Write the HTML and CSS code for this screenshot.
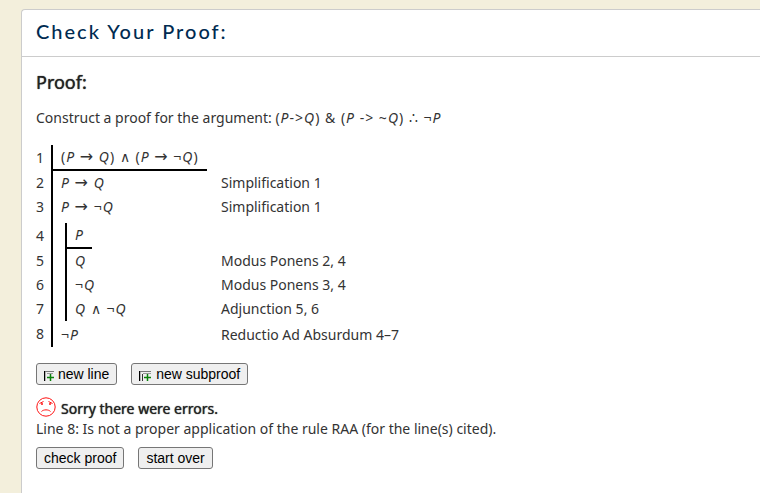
FILE: index.html
```
<!DOCTYPE html>
<html lang="en">
<head>
    <meta charset="UTF-8">
    <meta name="viewport" content="width=device-width, initial-scale=1.0">
    <title>Check Your Proof</title>
    <link rel="stylesheet" href="styles.css">
</head>
<body>
    <main class="card">
        <h1 class="card-title">Check Your Proof:</h1>
        <div class="card-body">
            <h2 class="proof-title">Proof:</h2>
            <p class="problem">Construct a proof for the argument: <span class="math">(<i>P</i>-&gt;<i>Q</i>) &amp; (<i>P</i> -&gt; ~<i>Q</i>) ∴ ¬<i>P</i></span></p>

            <table class="proof">
                <tr>
                    <th scope="row">1</th>
                    <td class="formula math"><div class="premise">(<i>P</i> <span class="arrow">→</span> <i>Q</i>) ∧ (<i>P</i> <span class="arrow">→</span> ¬<i>Q</i>)</div></td>
                    <td class="rule"></td>
                </tr>
                <tr>
                    <th scope="row">2</th>
                    <td class="formula math"><div class="wff"><i>P</i> <span class="arrow">→</span> <i>Q</i></div></td>
                    <td class="rule">Simplification 1</td>
                </tr>
                <tr>
                    <th scope="row">3</th>
                    <td class="formula math"><div class="wff"><i>P</i> <span class="arrow">→</span> ¬<i>Q</i></div></td>
                    <td class="rule">Simplification 1</td>
                </tr>
                <tr class="sub-first">
                    <th scope="row">4</th>
                    <td class="formula math"><div class="sub"><div class="premise"><i>P</i></div></div></td>
                    <td class="rule"></td>
                </tr>
                <tr>
                    <th scope="row">5</th>
                    <td class="formula math"><div class="sub"><div class="wff"><i>Q</i></div></div></td>
                    <td class="rule">Modus Ponens 2, 4</td>
                </tr>
                <tr>
                    <th scope="row">6</th>
                    <td class="formula math"><div class="sub"><div class="wff">¬<i>Q</i></div></div></td>
                    <td class="rule">Modus Ponens 3, 4</td>
                </tr>
                <tr>
                    <th scope="row">7</th>
                    <td class="formula math"><div class="sub"><div class="wff"><i>Q</i> ∧ ¬<i>Q</i></div></div></td>
                    <td class="rule">Adjunction 5, 6</td>
                </tr>
                <tr class="sub-after">
                    <th scope="row">8</th>
                    <td class="formula math"><div class="wff">¬<i>P</i></div></td>
                    <td class="rule">Reductio Ad Absurdum 4–7</td>
                </tr>
            </table>

            <div class="buttons">
                <button type="button">
                    <svg class="icon" width="10" height="12" viewBox="0 0 10 12" aria-hidden="true">
                        <path d="M0.500 1v10" stroke="#000" stroke-width="1.500"/>
                        <path d="M1 1.500h9" stroke="#777"/>
                        <path d="M3 3.500h6" stroke="#999"/>
                        <path d="M3 7.500h7M6.500 4v7" stroke="#0a800a" stroke-width="1.500"/>
                    </svg>
                    new line
                </button>
                <button type="button">
                    <svg class="icon" width="13" height="12" viewBox="0 0 13 12" aria-hidden="true">
                        <path d="M0.500 1v10" stroke="#000" stroke-width="1.500"/>
                        <path d="M3.500 4v7" stroke="#333"/>
                        <path d="M1 1.500h11" stroke="#777"/>
                        <path d="M4 3.500h8" stroke="#999"/>
                        <path d="M5 7.500h7M8.500 4v7" stroke="#0a800a" stroke-width="1.500"/>
                    </svg>
                    new subproof
                </button>
            </div>

            <div class="result">
                <div class="result-head">
                    <svg width="20" height="20" viewBox="0 0 20 20" fill="none" stroke="#f11" aria-hidden="true">
                        <circle cx="10" cy="10" r="9.200"/>
                        <path d="M3.500 6.500L7.500 4.500M12.500 4.500l4 2"/>
                        <path d="M5.500 14.500C7.500 12.300 12.500 12.300 14.500 14.500"/>
                        <circle cx="6" cy="7" r="1" fill="#f11" stroke="none"/>
                        <circle cx="14" cy="7" r="1" fill="#f11" stroke="none"/>
                    </svg>
                    <strong>Sorry there were errors.</strong>
                </div>
                <p class="result-text">Line 8: Is not a proper application of the rule RAA (for the line(s) cited).</p>
            </div>

            <div class="buttons">
                <button type="button">check proof</button>
                <button type="button">start over</button>
            </div>
        </div>
    </main>
</body>
</html>
```
FILE: styles.css
```
* {
    box-sizing: border-box;
}
body {
    display: flex;
    min-height: 100vh;
    margin: 0;
    padding: 9px 0 0 21px;
    background: #f3efdc;
    color: #333;
    font-family: "Noto Sans", sans-serif;
    font-size: 14px;
    line-height: 20px;
}
.card {
    flex: 1;
    background: white;
    border: 1px solid #ccc;
    border-width: 1px 0 0 1px;
    border-radius: 4px 0 0 0;
}
.card-title {
    margin: 0;
    padding: 8px 14px 12px;
    border-bottom: 1px solid #ccc;
    color: #002b51;
    font-family: Lato, sans-serif;
    font-size: 20px;
    font-weight: 500;
    line-height: 26px;
    letter-spacing: 2px;
}
.card-body {
    padding: 13px 14px;
}
.proof-title {
    margin: 0 0 14px;
    color: #222;
    font-size: 18px;
    font-weight: 400;
    line-height: 24px;
    text-shadow: 0 0 1px #222;
}
.problem {
    margin: 0 0 17px;
}
.math {
    letter-spacing: 1px;
}
.arrow {
    font-family: "DejaVu Sans", sans-serif;
    font-size: 16px;
    line-height: 1;
}

/* proof table */
.proof {
    margin-bottom: 16px;
    border-collapse: collapse;
}
.proof th,
.proof td {
    padding: 0;
    font-weight: normal;
    text-align: left;
}
.proof th {
    width: 16px;
}
.proof .formula {
    width: 169px;
    border-left: 2px solid black;
}
.wff {
    padding: 2px 8px;
}
.premise {
    width: fit-content;
    padding: 2px 8px;
    border-bottom: 2px solid black;
}
.sub {
    margin-left: 12px;
    border-left: 2px solid black;
}
.sub-first th,
.proof .sub-first td {
    padding-top: 4px;
}
.proof .sub-after td {
    padding-top: 2px;
}

.buttons {
    display: flex;
    gap: 14px;
}
button {
    height: 22px;
    padding: 0 7px;
    border: 1px solid #767676;
    border-radius: 3px;
    background: #efefef;
    color: black;
    font-family: "Liberation Sans", Arial, sans-serif;
    font-size: 14px;
    line-height: 20px;
}
.icon {
    vertical-align: -3px;
}

.result {
    margin: 12px 0 8px;
}
.result-head {
    display: flex;
    gap: 5px;
}
.result strong {
    padding-top: 2px;
    color: #222;
    font-weight: 400;
    text-shadow: 0 0 1px #222;
}
.result-text {
    margin: 0;
}
```
